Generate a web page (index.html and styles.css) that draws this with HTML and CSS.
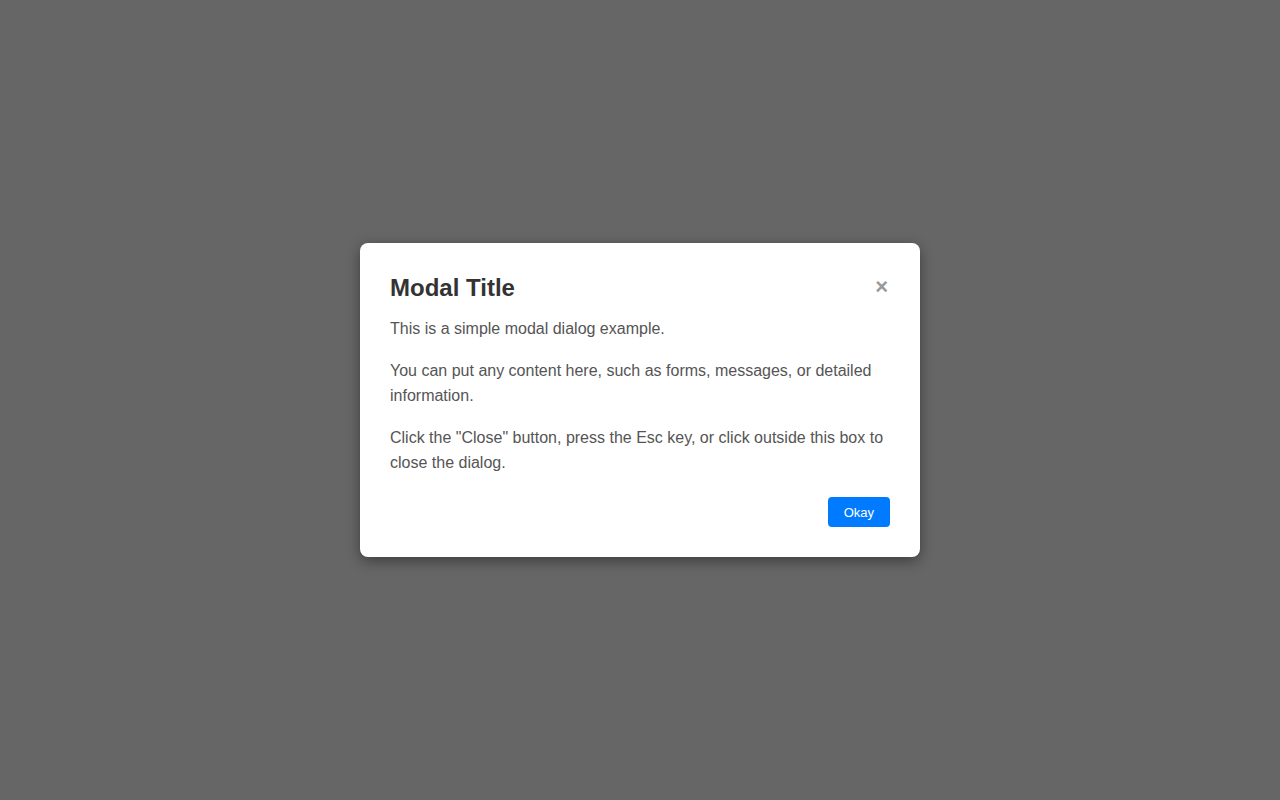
FILE: index.html
```html
<!DOCTYPE html>
<html>
<head>
<meta charset="utf-8">
<link rel="stylesheet" href="styles.css">
</head>
<body>
<div class="overlay">
  <div class="modal">
    <div class="modal-header">
      <h2 class="modal-title">Modal Title</h2>
      <span class="close">&times;</span>
    </div>
    <div class="modal-body">
      <p>This is a simple modal dialog example.</p>
      <p>You can put any content here, such as forms, messages, or detailed information.</p>
      <p>Click the "Close" button, press the Esc key, or click outside this box to close the dialog.</p>
    </div>
    <div class="modal-footer">
      <button class="btn">Okay</button>
    </div>
  </div>
</div>
</body>
</html>
```
FILE: styles.css
```css
html, body {
  margin: 0;
  padding: 0;
  height: 100%;
}
body {
  font-family: "Liberation Sans", Arial, sans-serif;
  background: #666666;
}
.overlay {
  height: 100vh;
  display: flex;
  align-items: center;
  justify-content: center;
}
.modal {
  width: 500px;
  background: #fff;
  border-radius: 8px;
  padding: 30px;
  box-shadow: 0 4px 14px rgba(0,0,0,0.4);
}
.modal-header {
  display: flex;
  justify-content: space-between;
  align-items: center;
  margin-bottom: 14px;
}
.modal-title {
  margin: 0;
  font-size: 24px;
  line-height: 29px;
  font-weight: bold;
  color: #333;
}
.close {
  font-size: 22px;
  line-height: 29px;
  font-weight: bold;
  color: #999;
  margin-top: -2px;
  margin-right: 2px;
}
.modal-body p {
  margin: 0 0 17px;
  font-size: 16px;
  line-height: 25px;
  color: #555;
}
.modal-body p:last-child {
  margin-bottom: 0;
}
.modal-footer {
  display: flex;
  justify-content: flex-end;
  margin-top: 22px;
}
.btn {
  background: #007bff;
  color: #fff;
  border: none;
  border-radius: 4px;
  font-family: "Liberation Sans", Arial, sans-serif;
  font-size: 13px;
  height: 30px;
  padding: 0 16px;
}
```
